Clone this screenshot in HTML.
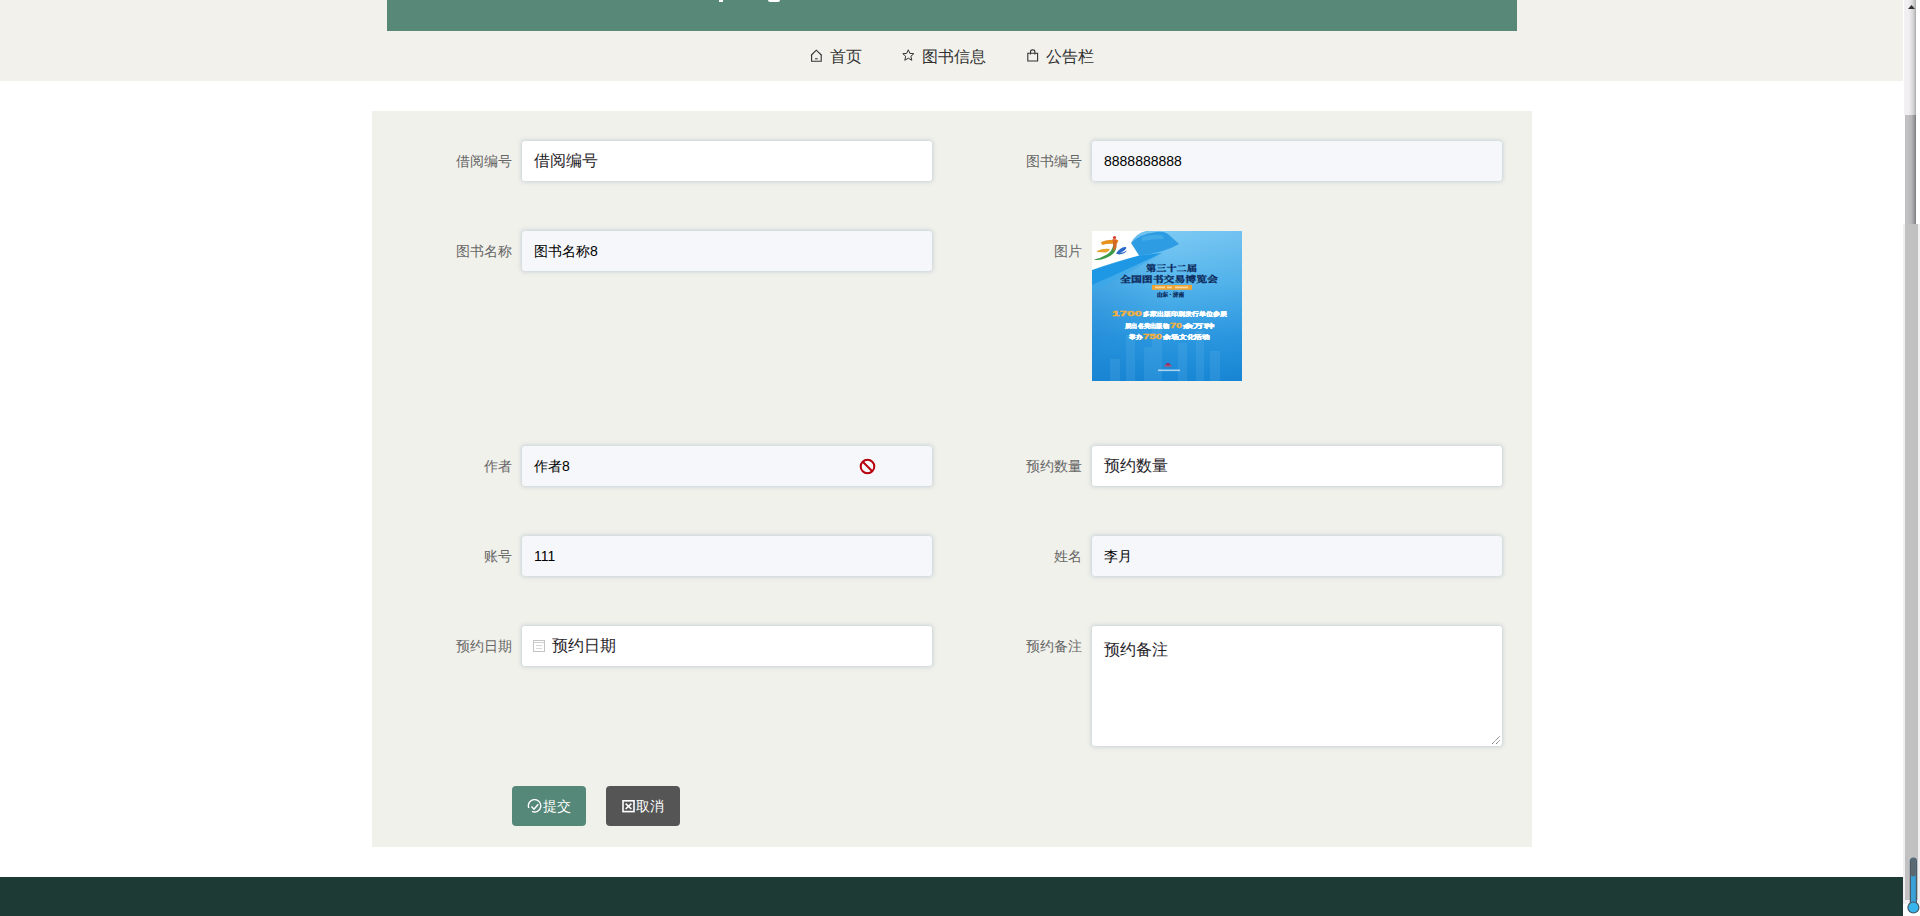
<!DOCTYPE html>
<html><head><meta charset="utf-8">
<style>
html,body{margin:0;padding:0;width:1920px;height:916px;overflow:hidden;background:#fff;font-family:"Liberation Sans",sans-serif;}
.abs{position:absolute;}
#nav{left:0;top:0;width:1903px;height:81px;background:#f2f1ec;}
#banner{left:387px;top:0;width:1130px;height:31px;background:#578878;}
.navi{position:absolute;top:46px;height:20px;font-size:16px;line-height:20px;color:#333;white-space:nowrap;}
.navi svg{position:absolute;}
#form{left:372px;top:111px;width:1160px;height:736px;background:#f1f1eb;}
.lbl{position:absolute;width:100px;text-align:right;font-size:14px;line-height:20px;color:#666;}
.inp{position:absolute;width:410px;height:40px;border-radius:3px;box-sizing:border-box;background:#fff;box-shadow:0 0 4px 1px rgba(100,140,170,.3);font-size:16px;line-height:40px;color:#1f2328;padding-left:12px;white-space:nowrap;}
.ro{background:#f5f7fa;font-size:14px;color:#000;}
#footer{left:0;top:877px;width:1903px;height:39px;background:#1e3a34;}
.btn{position:absolute;top:786px;width:74px;height:40px;border-radius:4px;color:#fff;font-size:14px;line-height:40px;}
</style></head>
<body>
<div id="nav" class="abs"></div>
<div id="banner" class="abs">
  <div class="abs" style="left:332px;top:0;width:4px;height:2px;background:#fff"></div>
  <div class="abs" style="left:381px;top:0;width:12px;height:2px;background:#fff;border-radius:0 0 6px 6px"></div>
</div>

<div class="navi" style="left:810px;">
  <svg style="left:0;top:3px" width="13" height="14" viewBox="0 0 13 14"><path d="M1 6.5 L6.3 1.2 L11.8 6.5 M1.6 6 V12.3 H11.2 V6" fill="none" stroke="#333" stroke-width="1.1"/><path d="M5 9.8 H7.8" stroke="#333" stroke-width="1"/></svg>
  <span style="position:absolute;left:20px;top:1px">首页</span>
</div>
<div class="navi" style="left:902px;">
  <svg style="left:0;top:3px" width="13" height="13" viewBox="0 0 13 13"><path d="M6.3 0.8 L7.9 4.4 L11.8 4.7 L8.9 7.3 L9.8 11.3 L6.3 9.2 L2.8 11.3 L3.7 7.3 L0.8 4.7 L4.7 4.4 Z" fill="none" stroke="#333" stroke-width="1" stroke-linejoin="round"/></svg>
  <span style="position:absolute;left:20px;top:1px">图书信息</span>
</div>
<div class="navi" style="left:1027px;">
  <svg style="left:0;top:3px" width="12" height="13" viewBox="0 0 12 13"><path d="M0.8 4.2 H10.6 V12 H0.8 Z" fill="none" stroke="#333" stroke-width="1.1"/><path d="M3.5 5.5 V2.8 Q3.5 0.9 5.7 0.9 Q7.9 0.9 7.9 2.8 V5.5" fill="none" stroke="#333" stroke-width="1.1"/></svg>
  <span style="position:absolute;left:19px;top:1px">公告栏</span>
</div>

<div id="form" class="abs"></div>

<!-- left column -->
<div class="lbl" style="left:412px;top:151px">借阅编号</div>
<div class="inp" style="left:522px;top:141px">借阅编号</div>

<div class="lbl" style="left:412px;top:241px">图书名称</div>
<div class="inp ro" style="left:522px;top:231px">图书名称8</div>

<div class="lbl" style="left:412px;top:456px">作者</div>
<div class="inp ro" style="left:522px;top:446px">作者8
  <svg class="abs" style="left:337px;top:12px" width="17" height="17" viewBox="0 0 17 17"><circle cx="8.5" cy="8.5" r="6.8" fill="none" stroke="#b8000e" stroke-width="2"/><path d="M4 4 L13 13" stroke="#b8000e" stroke-width="2"/></svg>
</div>

<div class="lbl" style="left:412px;top:546px">账号</div>
<div class="inp ro" style="left:522px;top:536px">111</div>

<div class="lbl" style="left:412px;top:636px">预约日期</div>
<div class="inp" style="left:522px;top:626px;padding-left:30px">
  <svg class="abs" style="left:11px;top:14px" width="13" height="13" viewBox="0 0 13 13"><rect x="0.5" y="0.5" width="11" height="11" fill="none" stroke="#c4c4c4" stroke-width="1"/><path d="M0.5 2.5 H11.5" stroke="#cfcfcf" stroke-width="1"/><path d="M3 5.5 H9 M3 8.5 H9" stroke="#d8d8d8" stroke-width="1"/></svg>
  预约日期</div>

<!-- right column -->
<div class="lbl" style="left:982px;top:151px">图书编号</div>
<div class="inp ro" style="left:1092px;top:141px">8888888888</div>

<div class="lbl" style="left:982px;top:241px">图片</div>
<svg class="abs" style="left:1092px;top:231px" width="150" height="150" viewBox="0 0 150 150">
<defs>
<linearGradient id="pg" x1="0" y1="0" x2="0" y2="1">
<stop offset="0" stop-color="#7ccaf4"/><stop offset="0.35" stop-color="#56b6ec"/><stop offset="0.7" stop-color="#2c98e0"/><stop offset="1" stop-color="#1786d4"/>
</linearGradient>
<linearGradient id="pl" x1="0" y1="0" x2="1" y2="0">
<stop offset="0" stop-color="#1a80d0" stop-opacity=".35"/><stop offset="0.5" stop-color="#1a80d0" stop-opacity="0"/><stop offset="1" stop-color="#1a80d0" stop-opacity=".1"/>
</linearGradient>
</defs>
<rect width="150" height="150" fill="url(#pg)"/>
<rect width="150" height="150" fill="url(#pl)"/>
<g fill="#8fd0f6" opacity=".13">
<rect x="18" y="128" width="10" height="22"/><rect x="34" y="104" width="9" height="46"/><rect x="52" y="116" width="8" height="34"/><rect x="60" y="90" width="10" height="60"/><rect x="86" y="112" width="9" height="38"/><rect x="104" y="100" width="8" height="50"/><rect x="118" y="120" width="10" height="30"/>
</g>
<path d="M0 54 Q28 42 70 22 L47 24.5 L0 39 Z" fill="#1e98e4"/>
<path d="M0 54 Q28 42 70 22 Q40 40 0 62 Z" fill="#3aa8ea" opacity=".6"/>
<path d="M39 12 Q48 3 64 1 Q72 0 76 3 L87 13 Q72 22 47 24.5 Z" fill="#2e9ce2"/>
<path d="M50 6 Q60 3 70 4 L72 8 Q60 8 50 10 Z" fill="#58b8ee" opacity=".5"/>
<path d="M0 0 L54 0 Q44 2 39 12 L47 24.5 Q22 31 0 39 Z" fill="#fff"/>
<path d="M9 11 Q16 8 26 9 Q27 11 24 13 Q16 12 10 14 Z" fill="#e8921e"/>
<path d="M5 20 Q11 17 18 18 Q17 21 14 21.5 Q9 21 5 21 Z" fill="#e8a22e"/>
<path d="M21 9 Q25 13 24 18 Q22 24 14 27 Q7 30 2 28.5 Q9 27 15 23.5 Q20 20 21 15 Z" fill="#3a9a48"/>
<path d="M20.5 8 L25 8.5 L24.5 16 Q23 19 21 20 Q22 15 20.5 8 Z" fill="#d86828"/>
<path d="M24 22.5 Q29 15 34 16 Q35 17 33 19 Q30 21 28 22 Q31 21.5 35 19.5 Q33 23 27 23.5 Z" fill="#2a68c8"/>
<circle cx="22.5" cy="6.5" r="1.6" fill="#d83a30"/>
<g font-family="'Noto Serif CJK SC', 'Liberation Serif', serif" font-weight="bold" fill="#0c2a5c" stroke="#0c2a5c" stroke-width="0.3">
<text x="54" y="39.5" font-size="8" textLength="51" lengthAdjust="spacingAndGlyphs">第三十二届</text>
<text x="28" y="50.5" font-size="8.5" textLength="98" lengthAdjust="spacingAndGlyphs">全国图书交易博览会</text>
<text x="65" y="64.5" font-size="4.5" textLength="27" lengthAdjust="spacingAndGlyphs">山东 · 济南</text>
</g>
<rect x="60" y="54" width="40" height="4.8" fill="#f0a232"/><path d="M63 56.4 H73 M75 56.4 H80 M83 56.4 H96" stroke="#fde6b8" stroke-width="1.6" opacity=".8"/>
<g font-family="Liberation Sans, sans-serif" font-weight="bold" stroke-width="0.35">
<text x="20" y="85" font-size="6.5" fill="#f2b040" stroke="#f2b040" textLength="30" lengthAdjust="spacingAndGlyphs">1700</text>
<text x="51" y="85" font-size="6" fill="#fff" stroke="#fff" textLength="84" lengthAdjust="spacingAndGlyphs">多家出版印刷发行单位参展</text>
<text x="33" y="96.5" font-size="6" fill="#fff" stroke="#fff" textLength="44" lengthAdjust="spacingAndGlyphs">展出各类出版物</text>
<text x="78" y="96.5" font-size="6.5" fill="#f2b040" stroke="#f2b040" textLength="12" lengthAdjust="spacingAndGlyphs">70</text>
<text x="91" y="96.5" font-size="6" fill="#fff" stroke="#fff" textLength="31" lengthAdjust="spacingAndGlyphs">余万种</text>
<text x="37" y="108" font-size="6" fill="#fff" stroke="#fff" textLength="13" lengthAdjust="spacingAndGlyphs">举办</text>
<text x="51" y="108" font-size="6.5" fill="#f2b040" stroke="#f2b040" textLength="19" lengthAdjust="spacingAndGlyphs">750</text>
<text x="71" y="108" font-size="6" fill="#fff" stroke="#fff" textLength="47" lengthAdjust="spacingAndGlyphs">余场文化活动</text>
</g>
<path d="M73 134.5 Q76 129 79 134.5 Z" fill="#a02a60"/><rect x="72.5" y="134.5" width="7" height="1" fill="#e04050"/>
<rect x="66" y="138.5" width="22" height="1.6" fill="#cfe6f8" opacity=".8"/>
</svg>

<div class="lbl" style="left:982px;top:456px">预约数量</div>
<div class="inp" style="left:1092px;top:446px">预约数量</div>

<div class="lbl" style="left:982px;top:546px">姓名</div>
<div class="inp ro" style="left:1092px;top:536px">李月</div>

<div class="lbl" style="left:982px;top:636px">预约备注</div>
<div class="inp" style="left:1092px;top:626px;height:120px;line-height:24px;padding-top:12px">预约备注
  <svg class="abs" style="left:399px;top:109px" width="10" height="10" viewBox="0 0 10 10"><path d="M1 9 L9 1 M5 9 L9 5" stroke="#555" stroke-width="0.9" stroke-dasharray="1.2 0.6"/></svg></div>

<div class="btn" style="left:512px;background:#558878">
  <svg class="abs" style="left:15px;top:13px" width="15" height="15" viewBox="0 0 15 15"><path d="M4.98 12.42 A6.2 6.2 0 1 0 1.77 8.92" fill="none" stroke="#fff" stroke-width="1.4"/><path d="M4.5 7.6 L7 10.2 L11.3 5.2" fill="none" stroke="#fff" stroke-width="1.5"/></svg>
  <span class="abs" style="left:31px;top:0">提交</span></div>
<div class="btn" style="left:606px;background:#555">
  <svg class="abs" style="left:16px;top:13px" width="14" height="15" viewBox="0 0 14 15"><rect x="1" y="1.8" width="11" height="10.8" fill="none" stroke="#fff" stroke-width="1.6"/><path d="M3.6 4.6 L9.4 10 M9.4 4.6 L3.6 10" stroke="#fff" stroke-width="1.6"/></svg>
  <span class="abs" style="left:30px;top:0">取消</span></div>

<div id="footer" class="abs"></div>
<div class="abs" style="left:1903px;top:0;width:17px;height:916px;background:#fff">
  <div class="abs" style="left:1px;top:0;width:12px;height:115px;background:linear-gradient(90deg,#f2f0f2 0%,#f1eff1 40%,#dcdadc 70%,#c0bfc1 90%,#a8a8a8 100%)"></div>
  <svg class="abs" style="left:4px;top:4px" width="9" height="6" viewBox="0 0 9 6"><path d="M1 5 L4.5 1 L8 5 Z" fill="#333"/></svg>
  <div class="abs" style="left:0;top:224px;width:17px;height:680px;background:#f0f0f2"></div>
  <div class="abs" style="left:2px;top:115px;width:11px;height:109px;background:linear-gradient(90deg,#b8b8ba 0%,#c4c4c6 15%,#b6b6b8 60%,#959597 85%,#7a7a7c 100%)"></div>
  <div class="abs" style="left:2px;top:224px;width:13px;height:676px;background:#c1c1c2"></div>
  <svg class="abs" style="left:4px;top:856px" width="13" height="60" viewBox="0 0 13 60"><rect x="3.4" y="2" width="6" height="50" rx="3" fill="#3aa0d8" stroke="#4a5a66" stroke-width="1.2"/><rect x="4" y="2.6" width="4.8" height="18" rx="2.4" fill="#5c6870"/><circle cx="6.4" cy="51.5" r="5.5" fill="#38b4ec" stroke="#445866" stroke-width="1.2"/></svg>
</div>
</body></html>
